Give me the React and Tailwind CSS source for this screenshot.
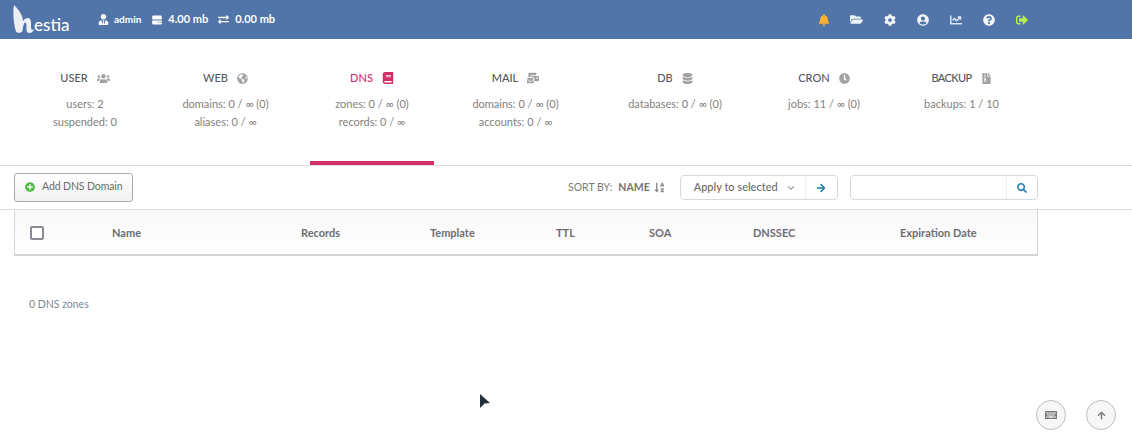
import React from "react";
import {
  FaUserTie, FaExchangeAlt, FaBell, FaFolderOpen, FaCog, FaUserCircle, FaChartLine,
  FaQuestionCircle, FaSignOutAlt, FaUsers, FaGlobeAmericas, FaBook, FaMailBulk, FaDatabase,
  FaClock, FaFileArchive, FaPlusCircle, FaSortAlphaDown, FaChevronDown, FaArrowRight, FaSearch,
  FaKeyboard, FaArrowUp,
} from "react-icons/fa";

const tabs = [
  { t: "USER", I: FaUsers, w: "w-[110px]", m: "", l: ["users: 2", "suspended: 0"], is: "text-[13px]", ts: "" },
  { t: "WEB", I: FaGlobeAmericas, w: "w-[135px]", m: "ml-[18px]", l: ["domains: 0 / ∞ (0)", "aliases: 0 / ∞"], is: "text-[11px]", ts: "" },
  { t: "DNS", I: FaBook, w: "w-[124px]", m: "ml-[17px]", l: ["zones: 0 / ∞ (0)", "records: 0 / ∞"], active: true, is: "text-[12px]", ts: "" },
  { t: "MAIL", I: FaMailBulk, w: "w-[129px]", m: "ml-[17px]", l: ["domains: 0 / ∞ (0)", "accounts: 0 / ∞"], is: "text-[12px]", ts: "" },
  { t: "DB", I: FaDatabase, w: "w-[146px]", m: "ml-[22px]", l: ["databases: 0 / ∞ (0)"], is: "text-[11px]", ts: "" },
  { t: "CRON", I: FaClock, w: "w-[120px]", m: "ml-[16px]", l: ["jobs: 11 / ∞ (0)"], is: "text-[11px]", ts: "" },
  { t: "BACKUP", I: FaFileArchive, w: "w-[119px]", m: "ml-[18px]", l: ["backups: 1 / 10"], is: "text-[11px]", ts: "tracking-[-0.6px]" },
];

const cols = [
  { t: "Name", w: "w-[69px]", m: "ml-[68px]" },
  { t: "Records", w: "w-[60px]", m: "ml-[120px]" },
  { t: "Template", w: "w-[60px]", m: "ml-[69px]" },
  { t: "TTL", w: "w-[40px]", m: "ml-[66px]" },
  { t: "SOA", w: "w-[40px]", m: "ml-[53px]" },
  { t: "DNSSEC", w: "w-[60px]", m: "ml-[64px]" },
  { t: "Expiration Date", w: "w-[90px]", m: "ml-[87px]" },
];

const nav = [
  { I: FaBell, c: "text-[#fdb22f] text-[12px]" },
  { I: FaFolderOpen, c: "text-[#eef3f9] text-[13px]" },
  { I: FaCog, c: "text-[12px]" },
  { I: FaUserCircle, c: "text-[12px]" },
  { I: FaChartLine, c: "text-[12px] text-[#dfe7f2]" },
  { I: FaQuestionCircle, c: "text-[12px]" },
  { I: FaSignOutAlt, c: "text-[12px] text-[#b5f03f]" },
];

function Logo() {
  return (
    <div className="ml-[13px] w-[57px] h-[39px] flex items-start text-white">
      <svg width="21" height="30" viewBox="0 0 21 30" className="shrink-0 mt-[4px]">
        <path d="M1 1 C5 5 9.5 10 10 17 C12 14.5 15 13 17 15 C19 18 17 24 19 26 L21 25 C20 29 16 30 14 28 C12.5 25 14.5 20 12.5 18.5 C10.5 18 10 24 9.5 27 C8 29.5 4 29.5 3 27.5 C0.5 20 -0.3 8 1 1 Z" fill="#eef0f4" />
      </svg>
      <span className="mt-[15px] text-[17px] leading-[20px] font-medium">estia</span>
    </div>
  );
}

function DiskIcon() {
  return (
    <svg width="10" height="10" viewBox="0 0 10 10" className="shrink-0">
      <path d="M1.2 0.5 H8.8 A1 1 0 0 1 9.8 1.5 V4.4 H0.2 V1.5 A1 1 0 0 1 1.2 0.5 Z M0.2 5.4 H9.8 V8.5 A1 1 0 0 1 8.8 9.5 H1.2 A1 1 0 0 1 0.2 8.5 Z" fill="#fff" />
      <rect x="6" y="6.8" width="1" height="1" fill="#5174a9" />
      <rect x="7.8" y="6.8" width="1" height="1" fill="#5174a9" />
    </svg>
  );
}

export default function App() {
  return (
    <div className="relative w-[1132px] h-[438px] overflow-hidden bg-white font-['Lato','Noto_Sans',sans-serif] text-[#6f6f6f]">
      <header className="h-[39px] bg-[#5174a9] flex items-center text-white">
        <Logo />
        <div className="ml-[28px] flex items-center gap-[5px] text-[10px] font-bold">
          <FaUserTie className="text-[11px]" /><span>admin</span>
        </div>
        <div className="ml-[11px] flex items-center gap-[6px] text-[11px] font-bold">
          <DiskIcon /><span>4.00 mb</span>
        </div>
        <div className="ml-[10px] flex items-center gap-[6px] text-[11px] font-bold">
          <FaExchangeAlt className="text-[11px]" /><span>0.00 mb</span>
        </div>
        <nav className="ml-auto mr-[94px] flex items-center text-[#f2f4f8]">
          {nav.map(({ I, c }, i) => (
            <span key={i} className="w-[33px] flex justify-center"><I className={c} /></span>
          ))}
        </nav>
      </header>

      <section className="h-[127px] border-b border-[#dcdcdc] pl-[30px] flex">
        {tabs.map(({ t, I, w, m, l, active, is, ts }) => (
          <div key={t} className={`${w} ${m} h-[126px] text-center text-[11px] ${active ? "border-b-[4px] border-[#d1316b]" : ""}`}>
            <div className={`mt-[32px] h-[14px] flex items-center justify-center gap-[9px] ${active ? "text-[#cf2f6b]" : "text-[#54585f]"}`}>
              <span className={`text-[11px] leading-[14px] font-medium ${ts}`}>{t}</span>
              <I className={`${is} ${active ? "text-[#cf2f6b]" : "text-[#a2a2a2]"}`} />
            </div>
            <div className="mt-[10px] text-[#85817b] leading-[18px]">
              {l.map((x) => <div key={x}>{x}</div>)}
            </div>
          </div>
        ))}
      </section>

      <section className="h-[44px] border-b border-[#dcdcdc] flex items-center pl-[14px]">
        <button className="w-[119px] h-[29px] -mt-[1px] border border-[#aaaaaa] rounded-[3px] bg-gradient-to-b from-white to-[#f1f1f1] flex items-center pl-[10px] gap-[7px] text-[10.5px] tracking-[-0.1px] text-[#6c6c6c]">
          <FaPlusCircle className="text-[10px] text-[#4fb946]" />
          Add DNS Domain
        </button>
        <div className="ml-[435px] flex items-center text-[10.5px] text-[#7d7a76]">
          <span>SORT BY:</span>
          <span className="ml-[6px] font-bold text-[#76736f]">NAME</span>
          <FaSortAlphaDown className="ml-[4px] text-[11px] text-[#8a8a8a]" />
        </div>
        <div className="ml-[15px] w-[158px] h-[25px] border border-[#d5dae0] rounded-[4px] flex items-center">
          <div className="w-[125px] h-full flex items-center pl-[13px] text-[11px] font-medium text-[#6b6b6b] border-r border-[#eeeeee]">
            Apply to selected
            <FaChevronDown className="ml-[9px] text-[8px] text-[#a5a5a5]" />
          </div>
          <div className="flex-1 flex items-center justify-center"><FaArrowRight className="text-[10px] text-[#1f7fae]" /></div>
        </div>
        <div className="ml-[12px] w-[188px] h-[25px] border border-[#d5dae0] rounded-[4px] flex items-center">
          <div className="w-[156px] h-full border-r border-[#eeeeee]"></div>
          <div className="flex-1 flex items-center justify-center"><FaSearch className="text-[10px] text-[#1f7fae]" /></div>
        </div>
      </section>

      <section className="ml-[14px] w-[1024px] h-[46px] pt-[2px] border-l border-r border-b-2 border-[#d5d5d5] bg-gradient-to-b from-[#f8f8f8] to-white flex items-center text-[11px] font-bold text-[#6d6d72]">
        <span className="ml-[15px] w-[14px] h-[14px] border-2 border-[#8d8b96] rounded-[2px] bg-white shrink-0"></span>
        {cols.map((c) => (
          <span key={c.t} className={`${c.w} ${c.m} shrink-0 whitespace-nowrap`}>{c.t}</span>
        ))}
      </section>

      <p className="mt-[41px] ml-[29px] text-[10.5px] leading-[14px] text-[#7d8a96]">0 DNS zones</p>

      <svg width="12" height="17" viewBox="0 0 12 17" className="absolute left-[479px] top-[393px]">
        <path d="M1 1 L11 10 L5.5 10.5 L1 15 Z" fill="#243038" />
      </svg>

      <button className="absolute left-[1036px] top-[400px] w-[30px] h-[30px] rounded-full border border-[#bdbdbd] bg-[#f7f7f7] flex items-center justify-center">
        <FaKeyboard className="text-[12px] text-[#777777]" />
      </button>
      <button className="absolute left-[1086px] top-[400px] w-[30px] h-[30px] rounded-full border border-[#bdbdbd] bg-[#f7f7f7] flex items-center justify-center">
        <FaArrowUp className="text-[9px] text-[#777777]" />
      </button>
    </div>
  );
}
